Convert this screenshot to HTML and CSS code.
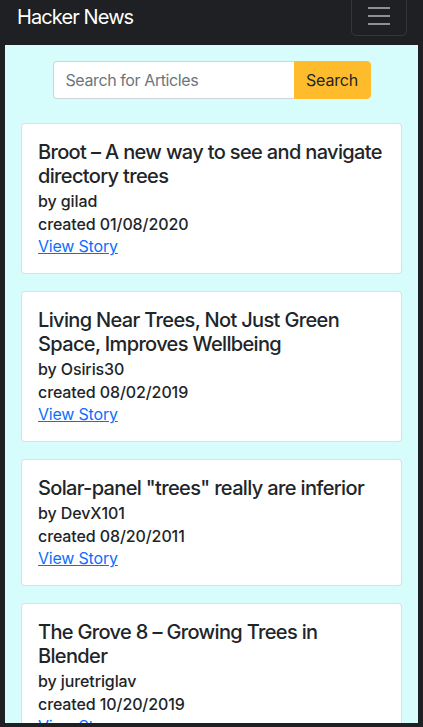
FILE: index.html
```html
<!DOCTYPE html>
<html lang="en">
<head>
<meta charset="utf-8">
<title>Hacker News</title>
<link rel="stylesheet" href="styles.css">
</head>
<body>
<nav class="navbar">
  <span class="brand">Hacker News</span>
  <button class="toggler" type="button" aria-label="Toggle navigation">
    <svg class="toggler-icon" viewBox="0 0 30 30" width="30" height="30" aria-hidden="true">
      <path d="M4 7h22M4 15h22M4 23h22" stroke="rgba(255,255,255,0.5)" stroke-width="2" stroke-linecap="butt"/>
    </svg>
  </button>
</nav>
<main class="main">
  <form class="search">
    <input class="search-input" type="text" placeholder="Search for Articles">
    <button class="search-btn" type="button">Search</button>
  </form>
  <div class="list">
    <div class="card">
      <h5 class="card-title">Broot – A new way to see and navigate directory trees</h5>
      <div class="meta by">by gilad</div>
      <div class="meta created">created 01/08/2020</div>
      <a class="story" href="#">View Story</a>
    </div>
    <div class="card">
      <h5 class="card-title">Living Near Trees, Not Just Green Space, Improves Wellbeing</h5>
      <div class="meta by">by Osiris30</div>
      <div class="meta created">created 08/02/2019</div>
      <a class="story" href="#">View Story</a>
    </div>
    <div class="card">
      <h5 class="card-title">Solar-panel "trees" really are inferior</h5>
      <div class="meta by">by DevX101</div>
      <div class="meta created">created 08/20/2011</div>
      <a class="story" href="#">View Story</a>
    </div>
    <div class="card">
      <h5 class="card-title">The Grove 8 – Growing Trees in Blender</h5>
      <div class="meta by">by juretriglav</div>
      <div class="meta created">created 10/20/2019</div>
      <a class="story" href="#">View Story</a>
    </div>
  </div>
</main>
</body>
</html>
```
FILE: styles.css
```css
* { box-sizing: border-box; }
html, body { margin: 0; padding: 0; }
body {
  background: #1f2023;
  font-family: Inter, "Noto Sans", sans-serif;
  color: #212529;
  height: 100vh;
  display: flex;
  flex-direction: column;
  overflow: hidden;
}
.navbar {
  height: 45px;
  flex: 0 0 45px;
  display: flex;
  justify-content: space-between;
  align-items: flex-start;
  padding: 0 16px 0 17px;
}
.brand {
  color: #fff;
  font-size: 20px;
  line-height: 30px;
  letter-spacing: -0.9px;
  margin-top: 2px;
}
.toggler {
  margin-top: -4px;
  width: 56px;
  height: 40px;
  padding: 4px 12px;
  background: transparent;
  border: 1px solid rgba(255,255,255,0.1);
  border-radius: 5px;
  display: flex;
  align-items: center;
  justify-content: center;
}
.toggler-icon { display: block; }
.main {
  flex: 1 1 auto;
  margin: 0 5px 4px;
  background: #d7fcfc;
  overflow: hidden;
  padding: 16px 16px 0;
}
.search {
  display: flex;
  justify-content: center;
  margin: 0 0 24px;
}
.search-input {
  width: 241px;
  height: 38px;
  border: 1px solid #ced4da;
  border-right: 0;
  border-radius: 4px 0 0 4px;
  padding: 6px 12px;
  font: inherit;
  font-size: 16px;
  letter-spacing: -0.4px;
  color: #212529;
  background: #fff;
}
.search-input::placeholder { color: #6c757d; }
.search-btn {
  width: 77px;
  height: 38px;
  border: 1px solid #febc2c;
  background: #febc2c;
  color: #212529;
  border-radius: 0 4px 4px 0;
  font: inherit;
  font-size: 16px;
  letter-spacing: -0.2px;
  padding: 0;
}
.list {
  display: flex;
  flex-direction: column;
  gap: 17px;
}
.card {
  background: #fff;
  border: 1px solid rgba(0,0,0,0.125);
  border-radius: 4px;
  padding: 16px;
  display: flex;
  flex-direction: column;
  align-items: flex-start;
}
.card-title {
  margin: 0;
  font-size: 20px;
  line-height: 24px;
  font-weight: 500;
  letter-spacing: -0.65px;
}
.meta {
  font-size: 16px;
  font-weight: 500;
  letter-spacing: -0.1px;
}
.by { line-height: 24px; padding-top: 1px; }
.created { line-height: 23px; }
.story {
  font-size: 16px;
  line-height: 21px;
  letter-spacing: -0.2px;
  color: #0d6efd;
  text-decoration: underline;
}
```
